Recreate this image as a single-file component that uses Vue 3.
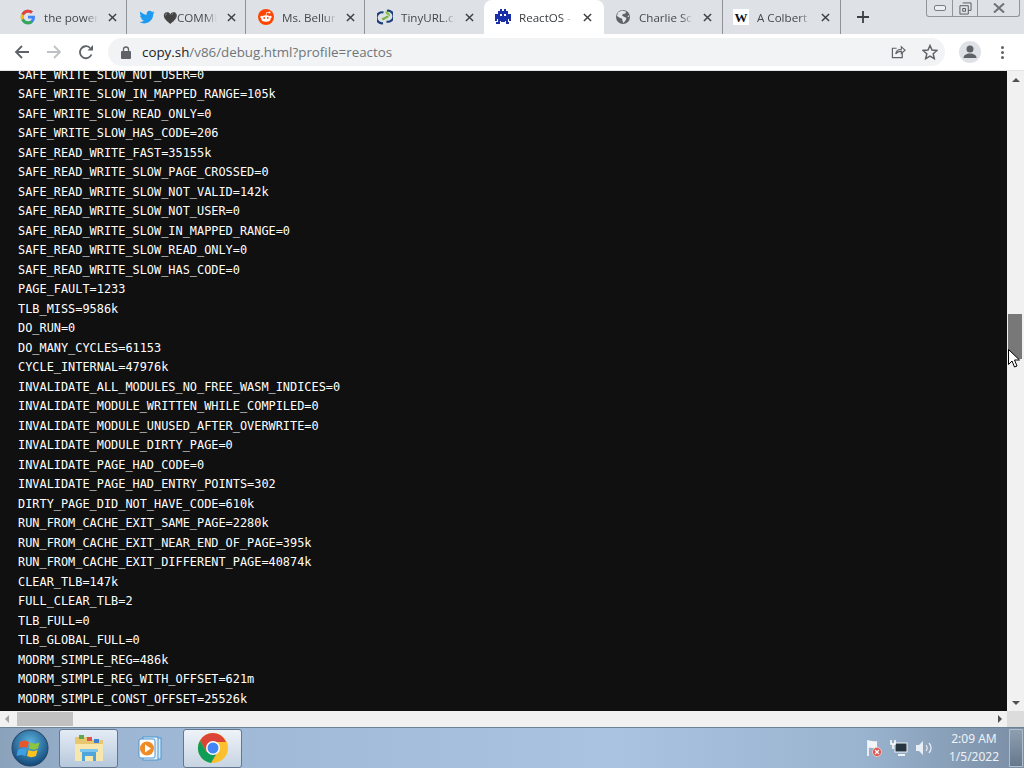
<script setup>
const tabs = [
  { title: 'the power', icon: 'g' },
  { title: '🖤COMMI', icon: 't' },
  { title: 'Ms. Bellun', icon: 'r' },
  { title: 'TinyURL.cc', icon: 'u' },
  { title: 'ReactOS -', icon: 'o', active: true },
  { title: 'Charlie Sc', icon: 'c' },
  { title: 'A Colbert', icon: 'w' }
]
const lines = `SAFE_WRITE_SLOW_NOT_USER=0
SAFE_WRITE_SLOW_IN_MAPPED_RANGE=105k
SAFE_WRITE_SLOW_READ_ONLY=0
SAFE_WRITE_SLOW_HAS_CODE=206
SAFE_READ_WRITE_FAST=35155k
SAFE_READ_WRITE_SLOW_PAGE_CROSSED=0
SAFE_READ_WRITE_SLOW_NOT_VALID=142k
SAFE_READ_WRITE_SLOW_NOT_USER=0
SAFE_READ_WRITE_SLOW_IN_MAPPED_RANGE=0
SAFE_READ_WRITE_SLOW_READ_ONLY=0
SAFE_READ_WRITE_SLOW_HAS_CODE=0
PAGE_FAULT=1233
TLB_MISS=9586k
DO_RUN=0
DO_MANY_CYCLES=61153
CYCLE_INTERNAL=47976k
INVALIDATE_ALL_MODULES_NO_FREE_WASM_INDICES=0
INVALIDATE_MODULE_WRITTEN_WHILE_COMPILED=0
INVALIDATE_MODULE_UNUSED_AFTER_OVERWRITE=0
INVALIDATE_MODULE_DIRTY_PAGE=0
INVALIDATE_PAGE_HAD_CODE=0
INVALIDATE_PAGE_HAD_ENTRY_POINTS=302
DIRTY_PAGE_DID_NOT_HAVE_CODE=610k
RUN_FROM_CACHE_EXIT_SAME_PAGE=2280k
RUN_FROM_CACHE_EXIT_NEAR_END_OF_PAGE=395k
RUN_FROM_CACHE_EXIT_DIFFERENT_PAGE=40874k
CLEAR_TLB=147k
FULL_CLEAR_TLB=2
TLB_FULL=0
TLB_GLOBAL_FULL=0
MODRM_SIMPLE_REG=486k
MODRM_SIMPLE_REG_WITH_OFFSET=621m
MODRM_SIMPLE_CONST_OFFSET=25526k`.split('\n')
</script>

<template>
  <div class="screen">
    <header class="tabstrip">
      <div v-for="t in tabs" :key="t.icon" class="tab" :class="{ active: t.active }">
        <svg class="fav" viewBox="0 0 16 16">
          <template v-if="t.icon === 'g'">
            <path d="M14.7 6.7H8v2.8h3.9c-.4 1.9-2 3-3.9 3a4.500 4.500 0 1 1 2.900-8l2-2A7.300 7.300 0 1 0 8 15.300c3.800 0 7-2.700 7-7.300 0-.4 0-.9-.3-1.300z" fill="#4285f4"/>
            <path d="M1.500 4.700 3.900 6.500A4.500 4.500 0 0 1 10.900 4.500l2-2A7.300 7.300 0 0 0 1.500 4.700z" fill="#ea4335"/>
            <path d="M1.500 4.700a7.300 7.300 0 0 0 0 6.600l2.400-1.800a4.500 4.500 0 0 1 0-3z" fill="#fbbc05"/>
            <path d="M1.500 11.300A7.300 7.300 0 0 0 8 15.300c1.900 0 3.600-.6 4.900-1.800l-2.300-1.800c-.7.500-1.600.8-2.600.8a4.500 4.500 0 0 1-4.100-3z" fill="#34a853"/>
          </template>
          <path v-else-if="t.icon === 't'" d="M15.500 3.300c-.6.300-1.200.4-1.800.5.600-.4 1.100-1 1.400-1.700-.6.400-1.300.6-2 .8a3.100 3.100 0 0 0-5.400 2.800C5.200 5.600 2.900 4.400 1.400 2.500c-.8 1.400-.4 3.200 1 4.100-.5 0-1-.1-1.400-.4 0 1.500 1.100 2.800 2.500 3.100-.5.100-.9.100-1.400 0 .4 1.200 1.500 2.100 2.900 2.100A6.300 6.300 0 0 1 .5 13c1.400.9 3.100 1.400 4.800 1.400 5.800 0 9.100-4.900 8.900-9.300.6-.5 1-1.100 1.300-1.800z" fill="#1d9bf0"/>
          <template v-else-if="t.icon === 'r'">
            <circle cx="8" cy="8" r="8" fill="#ff4500"/>
            <ellipse cx="8" cy="9.500" rx="4.700" ry="3.200" fill="#fff"/>
            <circle cx="3.500" cy="8" r="1.200" fill="#fff"/><circle cx="12.500" cy="8" r="1.200" fill="#fff"/>
            <circle cx="11.500" cy="3.500" r="1" fill="#fff"/>
            <path d="M8 6.500 8.700 3.300l2.500.3" fill="none" stroke="#fff" stroke-width=".7"/>
            <circle cx="6.200" cy="9" r=".9" fill="#ff4500"/><circle cx="9.800" cy="9" r=".9" fill="#ff4500"/>
          </template>
          <template v-else-if="t.icon === 'u'">
            <path d="M6.500 3.500A5.500 5.500 0 1 0 6 14.200" fill="none" stroke="#1b3f78" stroke-width="2.200"/>
            <path d="M9.500 12.500A5.500 5.500 0 1 0 10 1.800" fill="none" stroke="#1b3f78" stroke-width="2.200"/>
            <path d="M4.500 9.500 10.500 6.500 12 8l-6 3.500z" fill="#7bb342"/>
            <path d="M8 2.500c3.500 0 5.500 2 5 5L9 5z" fill="#8bc34a"/>
          </template>
          <path v-else-if="t.icon === 'o'" d="M5 0h2v2h2V0h2v2h2v3h3v7h-2v-2h-1v3h1v2h-3v-3h-1v1H6v-1H5v3H1v-2h2v-3H2v2H0V5h3V2h2zM5 5v2h2V5zm4 0v2h2V5z" fill="#1a2fa8" fill-rule="evenodd"/>
          <template v-else-if="t.icon === 'c'">
            <circle cx="8" cy="8" r="7" fill="#5f6368"/>
            <path d="M7 1.500 3 3.500 2 7l3 2 2 .5.500 2.500 1 2 2-2.500 1-2.500-3-1.500-1.500-1L8 5l2.500-.5L11 2.500zM13.500 6l-1 1.500 1.500 1z" fill="#e3e6ea"/>
          </template>
          <template v-else>
            <rect width="16" height="16" fill="#fff"/>
            <text x="8" y="12.500" text-anchor="middle" class="wiki">W</text>
          </template>
        </svg>
        <span class="title">{{ t.title }}</span>
        <svg class="close" viewBox="0 0 10 10"><path d="M1 1l8 8M9 1 1 9" stroke="#3c4043" stroke-width="1.600" fill="none"/></svg>
      </div>
      <svg class="plus" viewBox="0 0 12 12"><path d="M6 0v12M0 6h12" stroke="#3c4043" stroke-width="1.800"/></svg>
      <div class="winctl">
        <div class="wbtn min"><i></i></div>
        <div class="wbtn max"><svg viewBox="0 0 14 14" width="13" height="13"><path d="M4 1h9v8h-3M1 4h9v9H1zM4 7h3v3H4z" fill="none" stroke="#50565c"/></svg></div>
        <div class="wbtn cls"><svg viewBox="0 0 12 10" width="12" height="10"><path d="M1 .5 11 9.500M11 .5 1 9.500" stroke="#6c7278" stroke-width="2" fill="none"/></svg></div>
      </div>
    </header>

    <nav class="toolbar">
      <svg class="nav first" viewBox="0 0 16 16"><path d="M15 8H2M8 2 2 8l6 6" fill="none" stroke="#5f6368" stroke-width="1.800"/></svg>
      <svg class="nav" viewBox="0 0 16 16"><path d="M1 8h13M8 2l6 6-6 6" fill="none" stroke="#bdc1c6" stroke-width="1.800"/></svg>
      <svg class="nav" viewBox="0 0 16 16"><path d="M13.500 10.500A6 6 0 1 1 12 3.800" fill="none" stroke="#5f6368" stroke-width="1.800"/><path d="M9.500 6.500H15V1z" fill="#5f6368"/></svg>
      <div class="omni">
        <svg class="lock" viewBox="0 0 10 13"><path d="M2.500 5V3.500a2.500 2.500 0 0 1 5 0V5" fill="none" stroke="#5f6368" stroke-width="1.300"/><rect y="5" width="10" height="8" rx="1" fill="#5f6368"/></svg>
        <span class="url"><b>copy.sh</b>/v86/debug.html?profile=reactos</span>
        <svg class="omni-i share" viewBox="0 0 16 16"><path d="M12 8.500V14H1.500V4H6" fill="none" stroke="#5f6368" stroke-width="1.300"/><path d="M5 10c.5-3.500 3-5 6-5V2.500L15 6l-4 3.500V7c-2.500 0-4.500 1-6 3z" fill="none" stroke="#5f6368" stroke-width="1.200"/></svg>
        <svg class="omni-i star" viewBox="0 0 16 16"><path d="M8 1.500 10 6l5 .5-3.800 3.300 1.100 4.900L8 12.200l-4.300 2.500 1.100-4.900L1 6.500 6 6z" fill="none" stroke="#5f6368" stroke-width="1.500"/></svg>
      </div>
      <div class="avatar"><svg viewBox="0 0 22 22" width="22" height="22"><circle cx="11" cy="11" r="11" fill="#dee1e6"/><circle cx="11" cy="8" r="3.500" fill="#5f6368"/><path d="M4.500 17c0-3 3-4.500 6.500-4.500s6.500 1.500 6.500 4.500z" fill="#5f6368"/></svg></div>
      <div class="dots"><i></i><i></i><i></i></div>
    </nav>

    <main class="viewport">
      <div class="page">
        <div class="log">
          <div v-for="l in lines" :key="l" class="line">{{ l }}</div>
        </div>
      </div>
      <aside class="vbar">
        <span class="arrow up"></span>
        <div class="vtrack"><div class="vthumb"></div></div>
        <span class="arrow down"></span>
      </aside>
      <svg class="cursor" viewBox="0 0 12 19" width="12" height="19"><path d="M.5.500v15l3.500-3.500 2.500 6 2.500-1-2.500-6h5z" fill="#fff" stroke="#000"/></svg>
    </main>

    <div class="hbar">
      <span class="harrow left"></span>
      <div class="hthumb"></div>
      <span class="harrow right"></span>
      <div class="corner"></div>
    </div>

    <footer class="taskbar">
      <div class="start">
        <svg viewBox="0 0 38 38" width="38" height="38">
          <defs><radialGradient id="orb" cx=".5" cy=".35" r=".7"><stop offset="0" stop-color="#5db4e0"/><stop offset="1" stop-color="#0c3f70"/></radialGradient></defs>
          <circle cx="19" cy="19" r="18" fill="url(#orb)" stroke="#27405c"/>
          <path d="M9 13c3-2 6-2 9 0l-1.500 6c-3-1.500-6-1.500-9 0z" fill="#e8562a"/>
          <path d="M19.500 13.500c3 1.500 6 1.500 9 0L27 19.500c-3 1.500-6 1.500-9 0z" fill="#8cc63f"/>
          <path d="M7 20.500c3-1.500 6-1.500 9 0L14.500 27c-3-1.500-6-1.500-9 0z" fill="#3f9fe0"/>
          <path d="M17.500 21c3 1.500 6 1.500 9 0L25 27c-3 1.500-6 1.500-9 0z" fill="#fcc419"/>
        </svg>
      </div>
      <div class="task on">
        <svg viewBox="0 0 32 32" width="32" height="32">
          <path d="M2 5h12l2 3h14v21H2z" fill="#e9c76f"/>
          <rect x="6" y="3" width="5" height="4" fill="#5aa84f"/><rect x="14" y="5" width="5" height="4" fill="#d9534f"/><rect x="21" y="7" width="5" height="4" fill="#3f7fd0"/>
          <path d="M2 12h28v17H2z" fill="#f7e7ac"/>
          <path d="M9 29V20h14v9h-3v-5h-8v5z" fill="#4ea6dc"/>
          <rect x="7" y="17" width="18" height="3" fill="#7cc5ee"/>
        </svg>
      </div>
      <div class="task">
        <svg viewBox="0 0 30 30" width="30" height="30">
          <rect x="11" y="5" width="15" height="21" fill="#d7e6f4" stroke="#4d97d2"/>
          <rect x="8" y="4" width="15" height="23" fill="#e4eef7" stroke="#4d97d2"/>
          <rect x="4" y="6" width="16" height="19" rx="2" fill="#fff" stroke="#4d97d2"/>
          <circle cx="12" cy="15.500" r="7" fill="#ef8b27"/>
          <path d="M10 11.500v8l6-4z" fill="#fff"/>
        </svg>
      </div>
      <div class="task on chrome">
        <svg viewBox="0 0 32 32" width="32" height="32">
          <circle cx="16" cy="16" r="15" fill="#fbc02d"/>
          <path d="M16 1A15 15 0 0 0 3 8.500L9.500 20 16 10h13A15 15 0 0 0 16 1z" fill="#db4437"/>
          <path d="M3 8.500A15 15 0 0 0 14 31l6.500-11-11 0z" fill="#0f9d58"/>
          <circle cx="16" cy="16" r="7" fill="#fff"/><circle cx="16" cy="16" r="5.500" fill="#4285f4"/>
        </svg>
      </div>
      <div class="tray">
        <svg viewBox="0 0 18 18" width="18" height="18"><path d="M3 1v16" stroke="#fff" stroke-width="1.500"/><path d="M3 2c3-1 5 1 9 0v7c-4 1-6-1-9 0z" fill="#f2f5f8"/><circle cx="12" cy="13" r="4.500" fill="#d9534f" stroke="#f1c5c2"/><path d="M10 11l4 4M14 11l-4 4" stroke="#fff" stroke-width="1.200"/></svg>
        <svg viewBox="0 0 18 18" width="18" height="18"><rect x="5" y="4" width="12" height="9" fill="#26343f" stroke="#eef3f7"/><path d="M8 16h7" stroke="#eef3f7" stroke-width="2"/><path d="M1 1v4h4V1M3 5v5" fill="none" stroke="#fff" stroke-width="1.500"/></svg>
        <svg viewBox="0 0 18 18" width="18" height="18"><path d="M1 6h3l4-4v14l-4-4H1z" fill="#e8eef3"/><path d="M11 6c1.500 2 1.500 4 0 6M14 4c2.500 3 2.500 7 0 10" fill="none" stroke="#e8eef3" stroke-width="1.200"/></svg>
      </div>
      <div class="clock"><div>2:09 AM</div><div>1/5/2022</div></div>
      <div class="showdesk"></div>
    </footer>
  </div>
</template>

<style>
html, body { margin: 0; overflow: hidden; }
</style>

<style scoped>
.screen { width: 1024px; height: 768px; display: flex; flex-direction: column; overflow: hidden; font-family: "Open Sans", "Noto Sans", sans-serif; background: #fff; }

.tabstrip { height: 34px; background: #dee1e6; display: flex; align-items: center; padding-left: 8px; position: relative; box-sizing: border-box; flex: none; }
.tab { width: 119px; height: 34px; box-sizing: border-box; display: flex; align-items: center; padding-left: 11px; position: relative; border-right: 1px solid #8f9296; background-clip: padding-box; flex: none; }
.tab:nth-child(1), .tab:nth-child(2), .tab:nth-child(3), .tab:nth-child(4) { padding-left: 12px; }
.tab:nth-child(4) { border-right-color: transparent; }
.tab.active { width: 120px; background: #fff; border-radius: 8px 8px 0 0; border-right: none; }
.tab:nth-child(7) { width: 118px; padding-left: 10px; }
.fav { width: 16px; height: 16px; flex: none; }
.title { width: 54px; margin-left: 8px; font-size: 11.600px; color: #45494d; white-space: nowrap; overflow: hidden; flex: none; -webkit-mask-image: linear-gradient(90deg, #000 78%, transparent); mask-image: linear-gradient(90deg, #000 78%, transparent); }
.active .title { color: #3c4043; }
.close { width: 9px; height: 9px; margin-left: 10px; flex: none; }
.wiki { font-family: "Liberation Serif", serif; font-size: 13px; fill: #111; font-weight: 700; }
.plus { width: 12px; height: 12px; margin-left: 16px; flex: none; }
.winctl { position: absolute; right: 4px; top: 0; height: 16px; display: flex; border: 1px solid #8e959c; border-top: none; border-radius: 0 0 3px 3px; background: #dee1e6; }
.wbtn { display: flex; align-items: center; justify-content: center; height: 16px; }
.min { width: 25px; border-right: 1px solid #8e959c; }
.min i { display: block; width: 10px; height: 4px; border: 1px solid #777d83; border-radius: 2px; background: #eceef0; }
.max { width: 24px; border-right: 1px solid #8e959c; }
.cls { width: 41px; }

.toolbar { height: 37px; background: #fff; box-sizing: border-box; border-bottom: 1px solid #e3e4e6; display: flex; align-items: center; flex: none; }
.nav { width: 16px; height: 16px; margin-left: 16px; flex: none; }
.nav.first { margin-left: 14px; }
.omni { width: 837px; height: 28px; margin-left: 14px; border-radius: 14px; background: #f1f3f4; display: flex; align-items: center; padding-left: 13px; box-sizing: border-box; flex: none; position: relative; }
.lock { width: 10px; height: 13px; flex: none; }
.url { margin-left: 11px; font-size: 13.350px; color: #70757a; white-space: nowrap; }
.url b { font-weight: 400; color: #202124; }
.omni-i { width: 16px; height: 16px; position: absolute; top: 6px; }
.share { right: 39px; left: auto; width: 15px; }
.star { right: 7px; }
.avatar { margin-left: 14px; width: 22px; height: 22px; flex: none; }
.dots { margin-left: 20px; display: flex; flex-direction: column; gap: 2px; }
.dots i { display: block; width: 3px; height: 3px; border-radius: 50%; background: #5f6368; }

.viewport { height: 640px; display: flex; background: #101010; position: relative; flex: none; overflow: hidden; }
.page { flex: 1; overflow: hidden; }
.log { margin-top: -5.250px; padding-left: 18px; font-family: "DejaVu Sans Mono", monospace; font-size: 11.900px; line-height: 19.500px; color: #fff; }
.line { white-space: pre; height: 19.500px; }
.vbar { width: 17px; background: #f1f1f1; display: flex; flex-direction: column; align-items: center; flex: none; }
.arrow { width: 0; height: 0; border-left: 4px solid transparent; border-right: 4px solid transparent; flex: none; }
.arrow.up { border-bottom: 4px solid #505050; margin: 7px 0 5px; }
.arrow.down { border-top: 4px solid #505050; margin: 6px 0; }
.vtrack { flex: 1; width: 100%; position: relative; }
.vthumb { position: absolute; left: 1px; top: 227px; width: 14px; height: 45px; background: #787878; }
.cursor { position: absolute; left: 1008px; top: 278px; }

.hbar { height: 16px; background: #f1f1f1; display: flex; align-items: center; position: relative; flex: none; }
.harrow { width: 0; height: 0; border-top: 4px solid transparent; border-bottom: 4px solid transparent; flex: none; }
.harrow.left { border-right: 4px solid #a3a3a3; margin-left: 5px; }
.hthumb { width: 56px; height: 14px; background: #c1c1c1; margin-left: 8px; }
.harrow.right { border-left: 4px solid #505050; margin-left: auto; margin-right: 22px; }
.corner { width: 17px; height: 16px; background: #dcdcdc; position: absolute; right: 0; top: 0; }

.taskbar { flex: 1; display: flex; align-items: center; position: relative; background: linear-gradient(90deg, #8ba2bb 0, #9cb6d3 12%, #a9c3e0 60%, #9ab4d0 84%, #7a8ea5 100%); border-top: 1px solid #6f8195; box-sizing: border-box; }
.start { width: 59px; height: 40px; display: flex; align-items: center; justify-content: center; flex: none; }
.task { width: 59px; height: 39px; margin-right: 2px; display: flex; align-items: center; justify-content: center; border: 1px solid transparent; box-sizing: border-box; border-radius: 3px; flex: none; }
.task.on { border-color: #63778e; background: linear-gradient(180deg, #e4ecf5, #b6c8dc); }
.chrome { margin-left: 2px; background: linear-gradient(180deg, #eef3f8, #c7d4e2) !important; }
.tray { margin-left: auto; display: flex; align-items: center; gap: 7px; }
.clock { width: 66px; margin-left: 8px; margin-right: 2px; text-align: center; font-size: 12px; line-height: 18px; color: #eef2f6; font-family: "Noto Sans", sans-serif; }
.showdesk { width: 14px; height: 38px; border: 1px solid #aebccb; background: linear-gradient(180deg, #8e9fb0, #65788c); box-sizing: border-box; margin-right: 1px; }
</style>
